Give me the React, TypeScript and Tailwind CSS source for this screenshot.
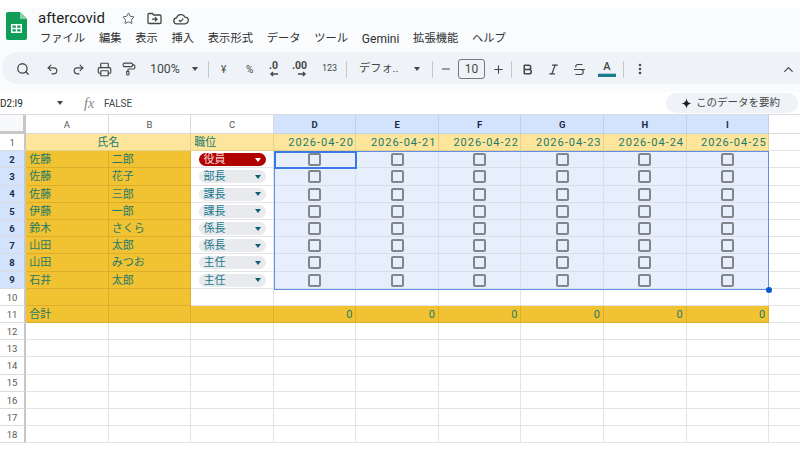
import { Search, Undo2, Redo2, Printer, PaintRoller, Star, ChevronUp, EllipsisVertical, Minus, Plus, Bold, Italic, Strikethrough } from "lucide-react";

const people = [
  ["佐藤", "二郎", "役員"],
  ["佐藤", "花子", "部長"],
  ["佐藤", "三郎", "課長"],
  ["伊藤", "一郎", "課長"],
  ["鈴木", "さくら", "係長"],
  ["山田", "太郎", "係長"],
  ["山田", "みつお", "主任"],
  ["石井", "太郎", "主任"],
];
const cols = ["D", "E", "F", "G", "H", "I"];
const dates = ["2026-04-20", "2026-04-21", "2026-04-22", "2026-04-23", "2026-04-24", "2026-04-25"];
const menus = ["ファイル", "編集", "表示", "挿入", "表示形式", "データ", "ツール", "Gemini", "拡張機能", "ヘルプ"];

const Caret = ({ className }: { className: string }) => (
  <span className={`w-0 h-0 border-x-[3.5px] border-x-transparent border-t-[4px] ${className}`} />
);
const Sep = () => <span className="block w-px h-[17px] bg-[#c7c7c7]" />;

const RowNum = ({ n, active }: { n: number; active?: boolean }) => (
  <div className={`flex items-center justify-center pt-px border-r-2 border-r-[#c7c7c7] border-b border-b-[#dcdcdc] text-[9.5px] ${active ? "bg-[#d3e3fd] font-bold text-[#1b2b4b]" : "bg-white text-[#575757]"}`}>
    {n}
  </div>
);

const cellLine = "border-r border-b border-[#e4e4e4]";
const orange = "bg-[#f1c232] border-r border-b border-[#dcae2c] text-[#1f7a68]";

const App = () => {
  return (
    <div className="w-[800px] h-[450px] overflow-hidden bg-white font-['Roboto','Noto_Sans_CJK_JP',sans-serif] text-[#444746]">
      <div className="h-[8px] bg-white" />
      <div className="h-[84px] bg-[#f9fbfd] flex flex-col">
        {/* Title + menu */}
        <div className="h-[44px] flex pl-[6px]">
          <svg width="22" height="28" viewBox="0 0 22 28" className="mt-[4px]">
            <path d="M2 0h12l7 7v19a2 2 0 0 1-2 2H2a2 2 0 0 1-2-2V2a2 2 0 0 1 2-2z" fill="#0f9d58" />
            <path d="M14 0l7 7h-7z" fill="#87ceac" />
            <path d="M5 12h11v9H5zM6.500 13.500v2.200h3.300v-2.200zM11.200 13.500v2.200h3.300v-2.200zM6.500 17.200v2.300h3.300v-2.300zM11.200 17.200v2.300h3.300v-2.300z" fill="#fff" fillRule="evenodd" />
          </svg>
          <div className="ml-[10px] flex flex-col">
            <div className="flex items-center h-[20px]">
              <span className="text-[15px] text-[#1f1f1f] w-[83.5px]">aftercovid</span>
              <Star size={13} strokeWidth={1.6} className="text-[#444746] mt-px" />
              <svg width="15" height="13" viewBox="0 0 15 13" fill="none" stroke="#444746" strokeWidth="1.300" className="ml-[12.5px] mt-px">
                <path d="M1 2.500a1 1 0 0 1 1-1h3.500l1.200 1.500H13a1 1 0 0 1 1 1v6.500a1 1 0 0 1-1 1H2a1 1 0 0 1-1-1z" />
                <path d="M5 7.200h5M8 5.200l2 2-2 2" />
              </svg>
              <svg width="16" height="12" viewBox="0 0 16 12" fill="none" stroke="#444746" strokeWidth="1.300" className="ml-[10.5px] mt-px">
                <path d="M4 10.800a3 3 0 0 1-.4-6A4.500 4.500 0 0 1 12 4.200a3.300 3.300 0 0 1 0 6.600z" />
                <path d="M5.800 7l1.700 1.600L10.300 5.600" />
              </svg>
            </div>
            <div className="flex gap-[13.7px] text-[11.3px] text-[#2f3133] mt-[2px] ml-[2px] leading-[18px]">
              {menus.map((m) => <span key={m} className={m === "Gemini" ? "text-[12px]" : ""}>{m}</span>)}
            </div>
          </div>
        </div>
        {/* Toolbar */}
        <div className="h-[32px] pt-[2px] ml-[2px] rounded-l-full bg-[#eff3f8] flex items-center text-[#444746]">
          <Search size={14} strokeWidth={2.2} className="ml-[14px]" />
          <Undo2 size={13} strokeWidth={2} className="ml-[15.5px]" />
          <Redo2 size={13} strokeWidth={2} className="ml-[13px]" />
          <Printer size={15} strokeWidth={1.900} className="ml-[12px]" />
          <PaintRoller size={14} strokeWidth={1.900} className="ml-[10.5px]" />
          <span className="text-[12.3px] ml-[14px] w-[30px]">100%</span>
          <Caret className="border-t-[#444746] ml-[12px]" />
          <span className="ml-[10px]"><Sep /></span>
          <span className="text-[10px] ml-[12px] w-[6px]">¥</span>
          <span className="text-[10px] ml-[19px] w-[8px]">%</span>
          <span className="ml-[15px] w-[10px] flex flex-col items-start leading-none">
            <span className="text-[10.5px] font-bold h-[10px]">.0</span>
            <svg width="10" height="6" viewBox="0 0 10 6" fill="none" stroke="#444746" strokeWidth="1.400"><path d="M9 3H2M4 1 2 3l2 2" /></svg>
          </span>
          <span className="ml-[16px] w-[12px] flex flex-col items-end leading-none">
            <span className="text-[10.5px] font-bold h-[10px]">.00</span>
            <svg width="10" height="6" viewBox="0 0 10 6" fill="none" stroke="#444746" strokeWidth="1.400"><path d="M1 3h7M6 1l2 2-2 2" /></svg>
          </span>
          <span className="text-[9px] ml-[15px] w-[14px]">123</span>
          <span className="ml-[10px]"><Sep /></span>
          <span className="text-[11.2px] ml-[12px] w-[40px] whitespace-nowrap overflow-hidden">デフォ..</span>
          <Caret className="border-t-[#444746] ml-[15px]" />
          <span className="ml-[12px]"><Sep /></span>
          <Minus size={12} strokeWidth={2} className="ml-[7px]" />
          <span className="ml-[6px] w-[27px] h-[20px] border border-[#747775] rounded-[3px] flex items-center justify-center text-[12px]">10</span>
          <Plus size={13} strokeWidth={2} className="ml-[6.5px]" />
          <span className="ml-[6.5px]"><Sep /></span>
          <Bold size={13} strokeWidth={2.800} className="ml-[9px]" />
          <Italic size={13} strokeWidth={2.200} className="ml-[12.5px]" />
          <Strikethrough size={15} strokeWidth={1.800} className="ml-[12px]" />
          <span className="ml-[11.5px] w-[18px] flex flex-col items-center leading-none">
            <span className="text-[11px] font-medium">A</span>
            <span className="w-[18px] h-[4px] mt-px bg-[#1a7a8d] border-t border-[#a9ccd2]" />
          </span>
          <span className="ml-[7px]"><Sep /></span>
          <EllipsisVertical size={14} strokeWidth={2.400} className="ml-[9px]" />
          <ChevronUp size={15} strokeWidth={2} className="ml-auto mr-[4.5px]" />
        </div>
      </div>
      {/* Formula bar */}
      <div className="h-[23px] flex items-center text-[10px] border-b border-[#dadce0]">
        <span className="w-[57px] text-[#1f1f1f]">D2:I9</span>
        <Caret className="border-t-[#444746]" />
        <span className="ml-[21px] w-[20px] font-['Liberation_Serif',serif] italic text-[14px] text-[#80868b]">fx</span>
        <span className="text-[10px] text-[#444746]">FALSE</span>
        <div className="ml-auto mr-[2px] h-[20px] w-[132px] rounded-full bg-[#eff3f8] flex items-center pl-[15px] text-[10.5px] text-[#444746]">
          <svg width="11" height="11" viewBox="0 0 24 24" fill="#1f1f1f"><path d="M12 1c1 7 4 10 11 11-7 1-10 4-11 11-1-7-4-10-11-11 7-1 10-4 11-11z" /></svg>
          <span className="ml-[4px]">このデータを要約</span>
        </div>
      </div>
      {/* Sheet */}
      <div className="relative grid grid-cols-[26.2px_repeat(9,82.55px)_31px] grid-rows-[19px_repeat(18,17.2px)] text-[10.5px] leading-none">
        <div className="bg-[#f8f9fa] border-r-[3px] border-b-[3px] border-[#c7c7c7]" />
        {["A", "B", "C"].map((c) => (
          <div key={c} className="flex items-center justify-center pt-px border-r border-b border-[#dadada] text-[9.5px] text-[#575757]">{c}</div>
        ))}
        {cols.map((c) => (
          <div key={c} className="flex items-center justify-center pt-px bg-[#d3e3fd] border-r border-b border-[#c3cfe2] text-[9.5px] font-bold text-[#1b2b4b]">{c}</div>
        ))}
        <div className="border-b border-[#dadada]" />

        <RowNum n={1} />
        <div className="col-span-2 flex items-center justify-center pt-px bg-[#fde59b] border-r border-b border-[#e5d08e] text-[#1a7a6d] text-[11px]">氏名</div>
        <div className="flex items-center pt-px pl-[3px] bg-[#fde59b] border-r border-b border-[#e5d08e] text-[#1a7a6d] text-[11px]">職位</div>
        {dates.map((d) => (
          <div key={d} className="flex items-center justify-end pt-px pr-[1.5px] bg-[#fde59b] border-r border-b border-[#e5d08e] text-[#1a7a6d] text-[11px] tracking-[1px]">{d}</div>
        ))}
        <div className="border-b border-[#e4e4e4]" />

        {people.map((p, i) => (
          <div key={i} className="contents">
            <RowNum n={i + 2} active />
            <div className={`flex items-center pt-px pl-[3px] text-[11px] ${orange}`}>{p[0]}</div>
            <div className={`flex items-center pt-px pl-[3px] text-[11px] ${orange}`}>{p[1]}</div>
            <div className={`flex items-center justify-center pt-px ${cellLine}`}>
              <span className={`w-[67px] h-[13px] rounded-full flex items-center pl-[5px] pr-[5px] justify-between text-[11px] ${i === 0 ? "bg-[#b10202] text-[#f5d6d6]" : "bg-[#e8eaed] text-[#1a7a8d]"}`}>
                {p[2]}
                <Caret className={i === 0 ? "border-t-white" : "border-t-[#0f5f73]"} />
              </span>
            </div>
            {cols.map((c) => (
              <div key={c} className="flex items-center justify-center pt-px bg-[#e8effc] border-r border-b border-[#d8deea]">
                <span className="w-[13px] h-[13px] border-2 border-[#80868b] rounded-[2px]" />
              </div>
            ))}
            <div className="border-b border-[#e4e4e4]" />
          </div>
        ))}

        <RowNum n={10} />
        <div className={orange} />
        <div className={orange} />
        {["C", ...cols].map((c) => <div key={c} className={cellLine} />)}
        <div className="border-b border-[#e4e4e4]" />

        <RowNum n={11} />
        <div className={`flex items-center pt-px pl-[3px] text-[11px] ${orange}`}>合計</div>
        <div className={orange} />
        <div className={orange} />
        {cols.map((c) => (
          <div key={c} className={`flex items-center justify-end pt-px pr-[3px] text-[11px] ${orange}`}>0</div>
        ))}
        <div className="border-b border-[#e4e4e4]" />

        {[12, 13, 14, 15, 16, 17, 18].map((n) => (
          <div key={n} className="contents">
            <RowNum n={n} />
            {["A", "B", "C", ...cols].map((c) => <div key={c} className={cellLine} />)}
            <div className="border-b border-[#e4e4e4]" />
          </div>
        ))}

        {/* selection */}
        <div className="absolute left-[273.5px] top-[36px] w-[495.6px] h-[138.6px] border border-[#5f8fe8] pointer-events-none" />
        <div className="absolute left-[273.5px] top-[36px] w-[83px] h-[18.2px] border-2 border-[#3b78e7] pointer-events-none" />
        <div className="absolute left-[766px] top-[171.5px] w-[6px] h-[6px] rounded-full bg-[#0b57d0]" />
      </div>
    </div>
  );
};

export default App;
